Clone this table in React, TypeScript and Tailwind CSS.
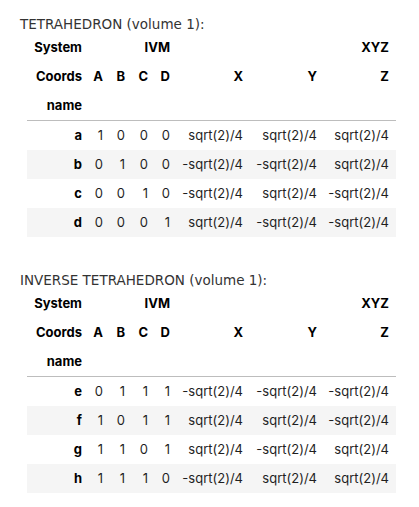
import React from 'react';

type Row = { name: string; ivm: number[]; xyz: string[] };

const tetra: Row[] = [
  { name: 'a', ivm: [1, 0, 0, 0], xyz: ['sqrt(2)/4', 'sqrt(2)/4', 'sqrt(2)/4'] },
  { name: 'b', ivm: [0, 1, 0, 0], xyz: ['-sqrt(2)/4', '-sqrt(2)/4', 'sqrt(2)/4'] },
  { name: 'c', ivm: [0, 0, 1, 0], xyz: ['-sqrt(2)/4', 'sqrt(2)/4', '-sqrt(2)/4'] },
  { name: 'd', ivm: [0, 0, 0, 1], xyz: ['sqrt(2)/4', '-sqrt(2)/4', '-sqrt(2)/4'] },
];

const inverse: Row[] = [
  { name: 'e', ivm: [0, 1, 1, 1], xyz: ['-sqrt(2)/4', '-sqrt(2)/4', '-sqrt(2)/4'] },
  { name: 'f', ivm: [1, 0, 1, 1], xyz: ['sqrt(2)/4', 'sqrt(2)/4', '-sqrt(2)/4'] },
  { name: 'g', ivm: [1, 1, 0, 1], xyz: ['sqrt(2)/4', '-sqrt(2)/4', 'sqrt(2)/4'] },
  { name: 'h', ivm: [1, 1, 1, 0], xyz: ['-sqrt(2)/4', 'sqrt(2)/4', 'sqrt(2)/4'] },
];

// idx | A B C D | X Y Z
const cols = 'grid grid-cols-[62px_21px_22px_23px_22px_73px_74px_72px] items-center';
const cell = 'text-right pr-[7px] whitespace-nowrap';

function Frame({ rows }: { rows: Row[] }) {
  return (
    <div className="w-[369px] ml-[7px] mt-[1px] text-[13px] text-[#1f1f1f] font-['Inter','Liberation_Sans',sans-serif]">
      {/* Header */}
      <div className={`${cols} h-[29px] font-bold text-black`}>
        <div className={cell}>System</div>
        <div className={`${cell} col-span-4`}>IVM</div>
        <div className={`${cell} col-span-3`}>XYZ</div>
      </div>
      <div className={`${cols} h-[29px] font-bold text-black`}>
        <div className={cell}>Coords</div>
        <div className={cell}>A</div>
        <div className={cell}>B</div>
        <div className={cell}>C</div>
        <div className={cell}>D</div>
        <div className={cell}>X</div>
        <div className={cell}>Y</div>
        <div className={cell}>Z</div>
      </div>
      <div className={`${cols} h-[30px] border-b border-[#bdbdbd] font-bold text-black`}>
        <div className={cell}>name</div>
      </div>

      {/* Body */}
      {rows.map((r, i) => (
        <div key={r.name} className={`${cols} h-[29px] ${i % 2 === 1 ? 'bg-[#f5f5f5]' : ''}`}>
          <div className={`${cell} font-bold text-black`}>{r.name}</div>
          {r.ivm.map((v, j) => (
            <div key={j} className={cell}>{v}</div>
          ))}
          {r.xyz.map((v, j) => (
            <div key={j} className={cell}>{v}</div>
          ))}
        </div>
      ))}
    </div>
  );
}

function Title({ children }: { children: React.ReactNode }) {
  return (
    <div className="h-4 leading-4 text-[13.5px] text-[#333] font-['DejaVu_Sans','Verdana',sans-serif]">
      {children}
    </div>
  );
}

export default function App() {
  return (
    <div className="w-[419px] min-h-[507px] bg-white pl-[20px] pt-[16px]">
      <Title>TETRAHEDRON (volume 1):</Title>
      <Frame rows={tetra} />
      <div className="mt-[35px]">
        <Title>INVERSE TETRAHEDRON (volume 1):</Title>
      </div>
      <Frame rows={inverse} />
    </div>
  );
}
